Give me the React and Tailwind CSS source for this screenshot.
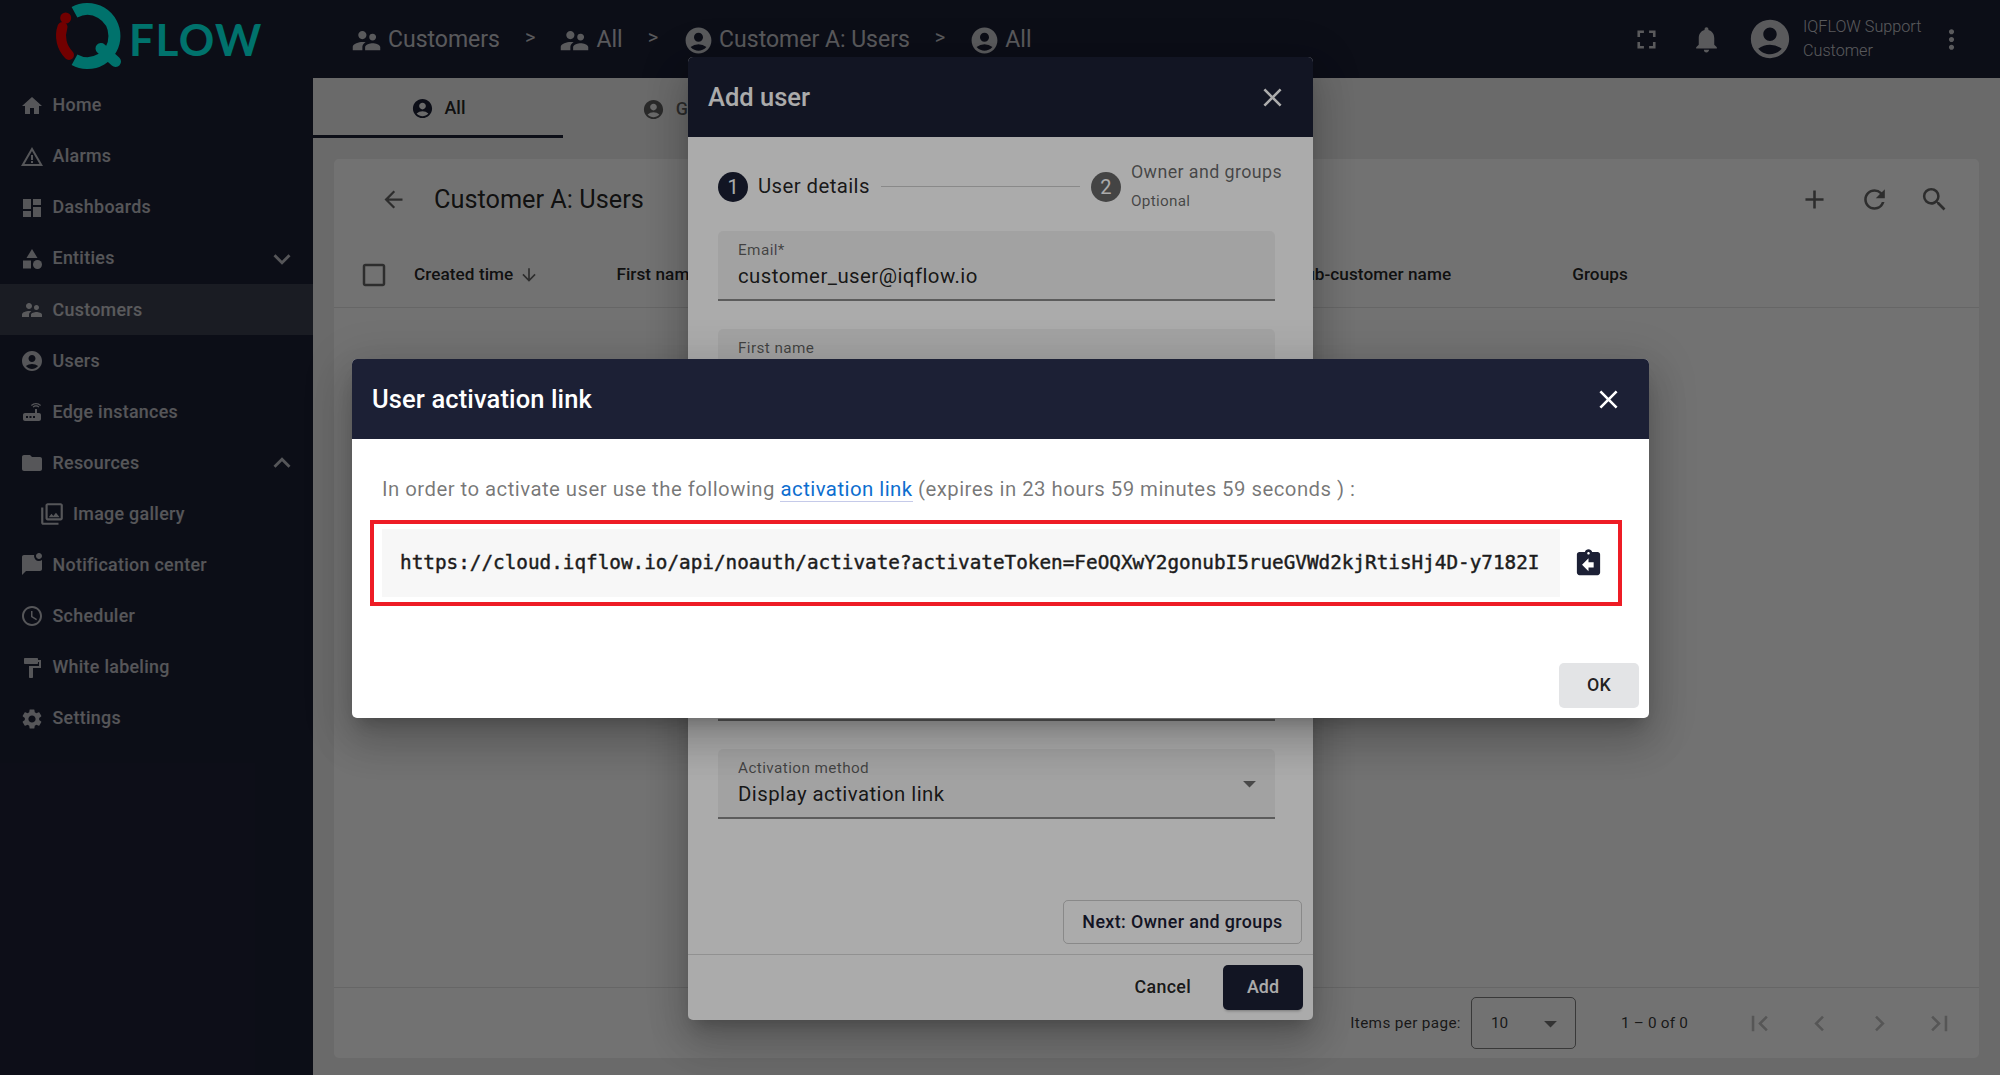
import React from "react";
import {
  MdHome, MdWarningAmber, MdDashboard, MdCategory, MdSupervisorAccount, MdAccountCircle, MdRouter,
  MdFolder, MdOutlinePhotoLibrary, MdMarkChatUnread, MdSchedule, MdFormatPaint, MdSettings,
  MdExpandMore, MdExpandLess, MdFullscreen, MdNotifications, MdMoreVert, MdArrowBack, MdArrowDownward,
  MdAdd, MdRefresh, MdSearch, MdCheckBoxOutlineBlank, MdArrowDropDown, MdFirstPage, MdChevronLeft,
  MdChevronRight, MdLastPage, MdClose, MdAssignmentReturn,
} from "react-icons/md";

const nav = [
  [MdHome, "Home"],
  [MdWarningAmber, "Alarms"],
  [MdDashboard, "Dashboards"],
  [MdCategory, "Entities", MdExpandMore],
  [MdSupervisorAccount, "Customers", null, true],
  [MdAccountCircle, "Users"],
  [MdRouter, "Edge instances"],
  [MdFolder, "Resources", MdExpandLess],
  [MdOutlinePhotoLibrary, "Image gallery", null, false, true],
  [MdMarkChatUnread, "Notification center"],
  [MdSchedule, "Scheduler"],
  [MdFormatPaint, "White labeling"],
  [MdSettings, "Settings"],
];

function Logo() {
  return (
    <div className="flex items-center w-[313px] pl-[54px] shrink-0">
      <svg width="70" height="78" viewBox="15 0 70 78" className="shrink-0">
        <path d="M35.5 12.3 A27 27 0 1 1 35.5 59.7" fill="none" stroke="#00fff0" strokeWidth="12" />
        <path d="M62 48.5 L76.5 61.5" stroke="#00fff0" strokeWidth="11" strokeLinecap="round" />
        <path d="M23.5 27 A27 27 0 0 0 30 55" fill="none" stroke="#ff0000" strokeWidth="10" strokeLinecap="round" />
        <circle cx="26.7" cy="18" r="5.5" fill="#ff0000" />
      </svg>
      <span className="ml-[5px] text-[44px] leading-none font-bold tracking-[1.5px] text-[#00fff0]" style={{ fontFamily: "Lato, sans-serif" }}>FLOW</span>
    </div>
  );
}

function Crumb({ icon: Icon, size, label, sep, gap }) {
  return (
    <div className="flex items-center">
      <Icon className={`${size} mr-[5px] shrink-0`} />
      <span>{label}</span>
      {sep && <span className={`ml-[25px] ${gap} text-[20px] -translate-y-[3px]`}>&gt;</span>}
    </div>
  );
}

function Field({ label, value, className, arrow }) {
  return (
    <div className={`relative h-[70px] w-[557px] rounded-t-[5px] bg-black/5 border-b-2 border-[#8a8a8a] pl-[20px] pt-[11px] ${className || ""}`}>
      <div className="text-[15.3px] leading-[16px] text-black/60 tracking-[0.4px]">{label}</div>
      <div className="mt-[4px] text-[20.4px] leading-[28px] text-black/[0.87] tracking-[0.45px]">{value}</div>
      {arrow && <MdArrowDropDown className="absolute right-[10px] top-[19px] text-[31px] text-black/55" />}
    </div>
  );
}

const dialogShadow = "shadow-[0_11px_15px_-7px_rgba(0,0,0,0.2),0_24px_38px_3px_rgba(0,0,0,0.14),0_9px_46px_8px_rgba(0,0,0,0.12)]";

export default function App() {
  return (
    <div className="relative w-[2000px] h-[1075px] overflow-hidden bg-[#eeeeee] text-black/[0.87]" style={{ fontFamily: "Roboto, sans-serif" }}>
      <header className="flex items-center h-[78px] bg-[#1c2035] text-white/[0.76]">
        <Logo />
        <div className="flex items-center ml-[37px] pt-[2px] text-[23px] font-normal">
          <Crumb icon={MdSupervisorAccount} size="text-[33px]" label="Customers" sep gap="mr-[23px]" />
          <Crumb icon={MdSupervisorAccount} size="text-[33px]" label="All" sep gap="mr-[25px]" />
          <Crumb icon={MdAccountCircle} size="text-[31px]" label="Customer A: Users" sep gap="mr-[24px]" />
          <Crumb icon={MdAccountCircle} size="text-[31px]" label="All" />
        </div>
        <div className="ml-auto flex items-center pr-[33px]">
          <MdFullscreen className="text-[31px] mr-[29px]" />
          <MdNotifications className="text-[31px] mr-[25px]" />
          <MdAccountCircle className="text-[46px] mr-[10px]" />
          <div className="w-[126px] text-[16.2px] leading-[24px] font-light">
            <div>IQFLOW Support</div>
            <div>Customer</div>
          </div>
          <MdMoreVert className="text-[31px] ml-[7px]" />
        </div>
      </header>

      <div className="flex h-[997px]">
        <aside className="w-[313px] shrink-0 bg-[#1c2035] text-white/[0.72] pt-[2px]">
          {nav.map(([Icon, label, Trail, active, nested]) => (
            <div key={label} className={`flex items-center h-[51.1px] text-[17.85px] font-medium tracking-[0.3px] ${active ? "bg-[#3d4050]" : ""} ${nested ? "pl-[39px]" : "pl-[20px]"}`}>
              <Icon className={`${nested ? "text-[26px] mr-[8px]" : "text-[24px] mr-[8.5px]"} shrink-0`} />
              <span>{label}</span>
              {Trail && <Trail className="ml-auto mr-[14px] text-[34px]" />}
            </div>
          ))}
        </aside>

        <main className="flex-1 flex flex-col min-w-0">
          <div className="flex h-[60px] shrink-0 text-[17.85px] font-medium">
            <div className="flex items-center justify-center w-[250px] pt-[3px] border-b-[3px] border-[#1c2035]">
              <MdAccountCircle className="text-[23px] text-[#1c2035] mr-[11px]" />
              <span>All</span>
            </div>
            <div className="flex items-center justify-center w-[249px] pt-[3px] text-black/60">
              <MdAccountCircle className="text-[23px] mr-[11px]" />
              <span>Groups</span>
            </div>
          </div>
          <section className="mt-[21px] ml-[21px] mr-[21px] flex-1 mb-[17px] bg-white rounded-[5px] flex flex-col">
            <div className="flex items-center h-[80px] shrink-0 pl-[46px] pr-[29px] text-black/70">
              <MdArrowBack className="text-[27px] text-black/60 mr-[27px]" />
              <span className="text-[25.3px] text-black/[0.87] translate-y-[1px]">Customer A: Users</span>
              <MdAdd className="ml-auto text-[31px] text-black/60" />
              <MdRefresh className="ml-[29px] text-[31px] text-black/60" />
              <MdSearch className="ml-[29px] text-[31px] text-black/60" />
            </div>
            <div className="flex items-center h-[69px] pt-[3px] shrink-0 border-b border-black/10 text-[17.2px] font-medium tracking-[0.05px] text-black/[0.87]">
              <MdCheckBoxOutlineBlank className="ml-[25px] text-[30px] text-black/60" />
              <span className="ml-[25px]">Created time</span>
              <MdArrowDownward className="ml-[6px] text-[20px] text-black/60" />
              <span className="ml-[77px]">First name</span>
              <span className="ml-[596px]">Sub-customer name</span>
              <span className="ml-[121px]">Groups</span>
            </div>
            <div className="flex-1" />
            <div className="flex items-center h-[71px] shrink-0 border-t border-black/10 text-[15.3px] text-black/[0.8]">
              <span className="ml-auto tracking-[0.35px]">Items per page:</span>
              <div className="flex items-center justify-between ml-[10px] w-[105px] h-[52px] border border-black/50 rounded-[5px] pl-[19px] pr-[9px] text-[15.3px]">
                <span>10</span>
                <MdArrowDropDown className="text-[31px] text-black/55" />
              </div>
              <span className="ml-[45px] text-[15.3px] tracking-[0.2px]">1 – 0 of 0</span>
              <div className="flex items-center ml-[56px] mr-[24px] gap-[29px] text-black/25">
                <MdFirstPage className="text-[31px]" />
                <MdChevronLeft className="text-[31px]" />
                <MdChevronRight className="text-[31px]" />
                <MdLastPage className="text-[31px]" />
              </div>
            </div>
          </section>
        </main>
      </div>

      <div className="absolute inset-0 bg-black/[0.33]" />

      <div className={`absolute left-[688px] top-[57px] w-[625px] h-[963px] bg-white rounded-[5px] flex flex-col overflow-hidden ${dialogShadow}`}>
        <div className="flex items-center justify-between h-[80px] shrink-0 bg-[#1c2035] text-white pl-[20px] pr-[25px]">
          <span className="text-[25.5px] font-medium">Add user</span>
          <MdClose className="text-[31px]" />
        </div>
        <div className="flex-1 flex flex-col pl-[30px] pr-[11px] min-h-0">
          <div className="flex items-center h-[94px] pt-[5px] shrink-0 pr-[20px]">
            <div className="flex items-center justify-center w-[30px] h-[30px] rounded-full bg-[#1c2035] text-white text-[20px]">1</div>
            <span className="ml-[10px] text-[20.4px] tracking-[0.4px]">User details</span>
            <div className="flex-1 h-px bg-black/20 mx-[11px]" />
            <div className="flex items-center justify-center w-[30px] h-[30px] rounded-full bg-black/60 text-white text-[20px]">2</div>
            <div className="ml-[10px] text-black/60">
              <div className="text-[17.85px] leading-[28px] tracking-[0.4px]">Owner and groups</div>
              <div className="text-[15.3px] leading-[30px] tracking-[0.3px]">Optional</div>
            </div>
          </div>
          <Field label="Email*" value="customer_user@iqflow.io" />
          <Field label="First name" value="" className="mt-[28px]" />
          <Field label="Last name" value="" className="mt-[28px]" />
          <Field label="Phone" value="" className="mt-[154px]" />
          <Field label="Activation method" value="Display activation link" className="mt-[28px]" arrow />
          <div className="flex justify-end mt-[81px]">
            <div className="flex items-center justify-center w-[239px] h-[44px] border border-black/20 rounded-[5px] text-[17.85px] font-medium tracking-[0.4px] text-[#1c2035]">Next: Owner and groups</div>
          </div>
        </div>
        <div className="flex items-center justify-end h-[66px] pt-[10px] pb-[10px] shrink-0 border-t border-black/15 pr-[10px]">
          <span className="text-[17.85px] font-medium tracking-[0.3px] mr-[32px]">Cancel</span>
          <div className="flex items-center justify-center w-[80px] h-[45px] rounded-[5px] bg-[#1c2035] text-white text-[17.85px] font-medium shadow-[0_3px_3px_-2px_rgba(0,0,0,0.3)]">Add</div>
        </div>
      </div>

      <div className="absolute inset-0 bg-black/[0.33]" />

      <div className={`absolute left-[352px] top-[359px] w-[1297px] h-[359px] bg-white rounded-[5px] flex flex-col overflow-hidden ${dialogShadow}`}>
        <div className="flex items-center justify-between h-[80px] shrink-0 bg-[#1c2035] text-white pl-[20px] pr-[25px]">
          <span className="text-[25.5px] font-medium tracking-[0.12px]">User activation link</span>
          <MdClose className="text-[31px]" />
        </div>
        <div className="flex-1 flex flex-col pl-[30px] pr-[10px] pb-[10px]">
          <p className="mt-[36px] text-[20.4px] leading-[28px] tracking-[0.45px] text-black/[0.54]">
            In order to activate user use the following <a className="text-[#0d6ecf] border-b border-[#c5cae9]">activation link</a> (expires in 23 hours 59 minutes 59 seconds ) :
          </p>
          <div className="flex items-stretch self-start -ml-[12px] mt-[17px] w-[1252px] h-[86px] border-[4px] border-[#ee1c25]">
            <div className="flex items-center ml-[8px] mt-[5px] mb-[5px] w-[1178px] bg-[#f7f7f7] pl-[18px] text-[19.32px] font-normal text-[#1c1c1c] whitespace-nowrap [-webkit-text-stroke:0.45px_#1c1c1c]" style={{ fontFamily: '"DejaVu Sans Mono", monospace' }}>
              https://cloud.iqflow.io/api/noauth/activate?activateToken=FeOQXwY2gonubI5rueGVWd2kjRtisHj4D-y7182I
            </div>
            <MdAssignmentReturn className="self-center ml-[13px] text-[31px] text-[#1c2035]" />
          </div>
          <div className="mt-auto self-end flex items-center justify-center w-[80px] h-[45px] rounded-[5px] bg-[#e3e4e6] text-[17.85px] font-medium tracking-[0.3px] text-black/[0.87]">OK</div>
        </div>
      </div>
    </div>
  );
}
